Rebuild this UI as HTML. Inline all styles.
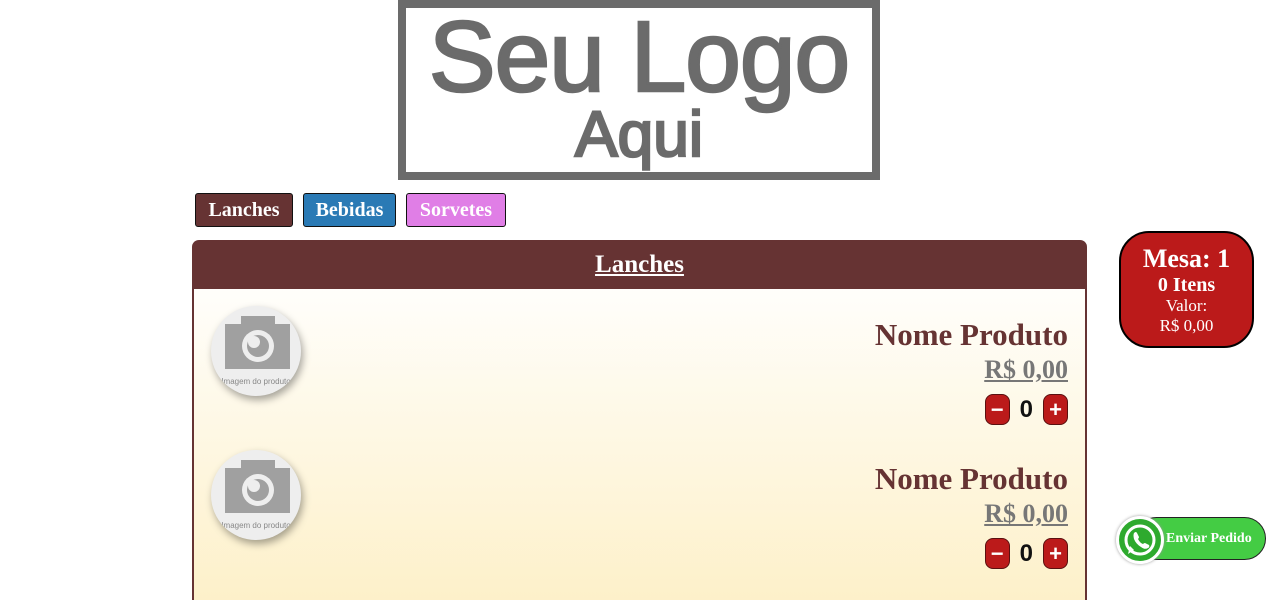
<!DOCTYPE html>
<html><head><meta charset="utf-8"><style>
body{margin:0;width:1280px;height:584px;overflow:hidden;background:#fff;font-family:"Liberation Serif",serif;position:relative}
.logo{position:absolute;left:398px;top:0;width:466px;height:164px;border:8px solid #6b6b6b;text-align:center;color:#6b6b6b;font-family:"Liberation Sans",sans-serif;font-weight:normal;-webkit-text-stroke:2.5px #6b6b6b}
.logo .a{font-size:100px;line-height:90px;letter-spacing:-1px;margin-top:4px}
.logo .b{font-size:64px;line-height:64px}
.tab{position:absolute;top:193px;height:32px;border:1px solid #111;border-radius:3px;color:#fff;font-weight:bold;font-size:20px;line-height:32px;text-align:center}
.panel{position:absolute;left:192px;top:240px;width:895px;height:360px;border-radius:7px 7px 0 0;overflow:hidden}
.ph{height:49px;background:#663333;color:#fff;text-align:center;font-weight:bold;font-size:25px;line-height:49px;text-decoration:underline}
.pb{height:320px;border:2px solid #663333;border-top:none;background:linear-gradient(#fffefb,#fdf0c8)}
.row{position:absolute;left:0;width:891px;height:144px}
.img{position:absolute;left:17px;top:17px;width:90px;height:90px;border-radius:50%;background:#eee;box-shadow:2px 4px 8px rgba(0,0,0,.35);overflow:hidden}
.nm{position:absolute;right:17px;top:28px;font-size:31px;font-weight:bold;color:#663333}
.pr{position:absolute;right:17px;top:66px;font-size:26px;font-weight:bold;color:#777;text-decoration:underline}
.q{position:absolute;right:17px;top:105px;display:flex;align-items:center;gap:10px}
.bt{width:23px;height:29px;background:#bb1a1a;border:1px solid #5a1010;border-radius:8px;color:#fff;font:bold 22px/29px "Liberation Sans",sans-serif;text-align:center}
.qn{font:bold 24px "Liberation Sans",sans-serif;color:#111}
.mesa{position:absolute;left:1119px;top:231px;width:131px;height:113px;background:#bb1a1a;border:2px solid #000;border-radius:30px;color:#fff;text-align:center}
.wa{position:absolute;left:1135px;top:517px;width:129px;height:41px;background:#44cc44;border:1px solid #222;border-radius:22px;color:#fff;font-weight:bold;font-size:14px;line-height:41px;text-indent:30px}
.wi{position:absolute;left:1116px;top:516px;width:42px;height:42px;border-radius:50%;background:#2eaa2e;border:3px solid #fff;box-shadow:0 0 3px #999}
</style></head><body>
<div class="logo"><div class="a">Seu Logo</div><div class="b">Aqui</div></div>
<div class="tab" style="left:195px;width:96px;background:#663333">Lanches</div>
<div class="tab" style="left:303px;width:91px;background:#2a7ab5">Bebidas</div>
<div class="tab" style="left:406px;width:98px;background:#e07ee6">Sorvetes</div>
<div class="panel"><div class="ph">Lanches</div><div class="pb" style="position:relative">
<div class="row" style="top:0">
<div class="img"><svg width="90" height="90" viewBox="0 0 90 90"><rect x="14" y="18" width="65" height="45" fill="#a0a0a0"/><rect x="30" y="10" width="34" height="10" fill="#a0a0a0"/><circle cx="47" cy="40" r="16" fill="#eee"/><circle cx="47" cy="40" r="11" fill="#a0a0a0"/><circle cx="43" cy="36" r="6" fill="#eee"/><text x="45" y="78" font-size="8" fill="#888" text-anchor="middle" font-family="Liberation Sans">Imagem do produto</text></svg></div>
<div class="nm">Nome Produto</div><div class="pr">R$ 0,00</div>
<div class="q"><div class="bt">−</div><div class="qn">0</div><div class="bt">+</div></div></div>
<div class="row" style="top:144px">
<div class="img"><svg width="90" height="90" viewBox="0 0 90 90"><rect x="14" y="18" width="65" height="45" fill="#a0a0a0"/><rect x="30" y="10" width="34" height="10" fill="#a0a0a0"/><circle cx="47" cy="40" r="16" fill="#eee"/><circle cx="47" cy="40" r="11" fill="#a0a0a0"/><circle cx="43" cy="36" r="6" fill="#eee"/><text x="45" y="78" font-size="8" fill="#888" text-anchor="middle" font-family="Liberation Sans">Imagem do produto</text></svg></div>
<div class="nm">Nome Produto</div><div class="pr">R$ 0,00</div>
<div class="q"><div class="bt">−</div><div class="qn">0</div><div class="bt">+</div></div></div>
</div></div>
<div class="mesa"><div style="font-size:26px;font-weight:bold;margin-top:11px;line-height:30px">Mesa: 1</div><div style="font-size:20px;font-weight:bold;line-height:22px">0 Itens</div><div style="font-size:17px;line-height:20px">Valor:</div><div style="font-size:17px;line-height:20px">R$ 0,00</div></div>
<div class="wa">Enviar Pedido</div>
<div class="wi"><svg width="42" height="42" viewBox="0 0 42 42"><circle cx="21" cy="21" r="14" fill="none" stroke="#fff" stroke-width="3"/><path d="M9 35 L11 27 L15 31Z" fill="#fff"/><path d="M15 14 q2-2 3 0 l2 4 q0 1-1 2 q2 4 5 5 q1-1 2-1 l4 2 q1 2-1 3 q-3 2-7-1 q-5-3-7-8 q-1-4 0-6z" fill="#fff"/></svg></div>
</body></html>
